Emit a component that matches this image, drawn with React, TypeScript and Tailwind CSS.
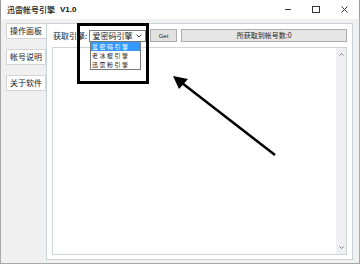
import React from 'react';

// Vertical tab on the left side
function SideTab({ label, active }: { label: string; active?: boolean }) {
  return (
    <div
      className={`ml-[5px] w-[40px] h-[16px] flex items-center pl-[3px] border border-[#d4d4d4] text-[8px] leading-none text-[#1a1a1a] ${
        active ? 'bg-white border-r-0 w-[41px]' : 'bg-white'
      }`}
    >
      {label}
    </div>
  );
}

export default function App() {
  const font = { fontFamily: '"Noto Sans CJK SC", "Noto Sans", sans-serif' };

  return (
    <div className="relative w-[360px] h-[264px] flex flex-col bg-white overflow-hidden" style={font}>
      {/* Title bar */}
      <div className="h-[19px] flex items-center bg-white border-x border-[#9a9a9a] pl-[6px]">
        <span className="text-[8px] leading-none font-medium text-[#111]">迅雷帐号引擎</span>
        <span className="ml-[5px] text-[8px] leading-none font-bold text-[#111]" style={{ fontFamily: '"Liberation Sans", sans-serif' }}>
          V1.0
        </span>
        <div className="ml-auto flex items-center h-full">
          <div className="w-[6px] h-px bg-[#333] mr-[21px]" />
          <div className="w-[8px] h-[7px] border border-[#333] mr-[21px]" />
          <svg width="7" height="7" viewBox="0 0 7 7" className="mr-[11px]">
            <path d="M0.5 0.5L6.5 6.5M6.5 0.5L0.5 6.5" stroke="#333" strokeWidth="1" />
          </svg>
        </div>
      </div>

      {/* Body */}
      <div className="flex-1 flex bg-[#f0f0f0] border-x border-b border-[#a8a8a8]">
        {/* Tabs column */}
        <div className="w-[45px] flex flex-col pt-[4px] gap-[10px]">
          <SideTab label="操作面板" active />
          <SideTab label="帐号说明" />
          <SideTab label="关于软件" />
        </div>

        {/* Tab page */}
        <div className="mt-[4px] mb-[3px] w-[307px] bg-white border border-[#c6d3d8] flex flex-col px-[5px] pt-[5px] pb-[4px]">
          <div className="flex items-center h-[13px]">
            <span className="ml-[1px] w-[37px] text-[8px] leading-none text-[#1a1a1a]">获取引擎:</span>
            <div className="w-[57px] h-[12px] border border-[#7a7a7a] bg-white flex items-center pl-[2px] text-[8px] leading-none text-[#1a1a1a]">
              <span>爱密码引擎</span>
              <svg width="6" height="4" viewBox="0 0 6 4" className="ml-auto mr-[3px]">
                <path d="M0.5 0.5L3 3L5.5 0.5" stroke="#444" fill="none" strokeWidth="1" />
              </svg>
            </div>
            <div className="ml-[4px] w-[28px] h-[13px] border border-[#adadad] bg-[#e1e1e1] flex items-center justify-center text-[6px] leading-none text-[#222]" style={{ fontFamily: '"Liberation Sans", sans-serif' }}>
              Get
            </div>
            <div className="ml-[4px] w-[168px] h-[13px] border border-[#adadad] bg-[#e6e6e6] flex items-center justify-center text-[7px] leading-none text-[#222]">
              所获取到帐号数:0
            </div>
          </div>

          {/* Text area */}
          <div className="mt-[5px] flex-1 flex border border-[#cbd6da] bg-white">
            <div className="flex-1" />
            <div className="w-[10px] bg-[#f0f0f0] flex flex-col items-center justify-between py-[5px]">
              <svg width="5" height="3" viewBox="0 0 5 3">
                <path d="M0.5 2.5L2.5 0.5L4.5 2.5" stroke="#777" fill="none" strokeWidth="1" />
              </svg>
              <svg width="5" height="3" viewBox="0 0 5 3">
                <path d="M0.5 0.5L2.5 2.5L4.5 0.5" stroke="#777" fill="none" strokeWidth="1" />
              </svg>
            </div>
          </div>
        </div>
      </div>

      {/* Open dropdown list */}
      <div className="absolute left-[90px] top-[41px] w-[51px] border border-[#7a7a7a] bg-white flex flex-col text-[6px] leading-[9px] tracking-[1.5px] text-[#1a1a1a]">
        <div className="h-[9px] overflow-hidden pl-[1px] bg-[#3399ff] text-white">爱密码引擎</div>
        <div className="h-[9px] overflow-hidden pl-[1px]">老冰棍引擎</div>
        <div className="h-[9px] overflow-hidden pl-[1px]">迅雷粉引擎</div>
      </div>

      {/* Annotation box */}
      <div className="absolute left-[77px] top-[23px] w-[72px] h-[61px] border-[3px] border-black" />

      {/* Annotation arrow */}
      <svg className="absolute left-0 top-0" width="360" height="264" viewBox="0 0 360 264">
        <line x1="275" y1="155" x2="182" y2="83" stroke="#000" strokeWidth="2.5" />
        <polygon points="173,76 188,79 179,89" fill="#000" />
      </svg>
    </div>
  );
}
